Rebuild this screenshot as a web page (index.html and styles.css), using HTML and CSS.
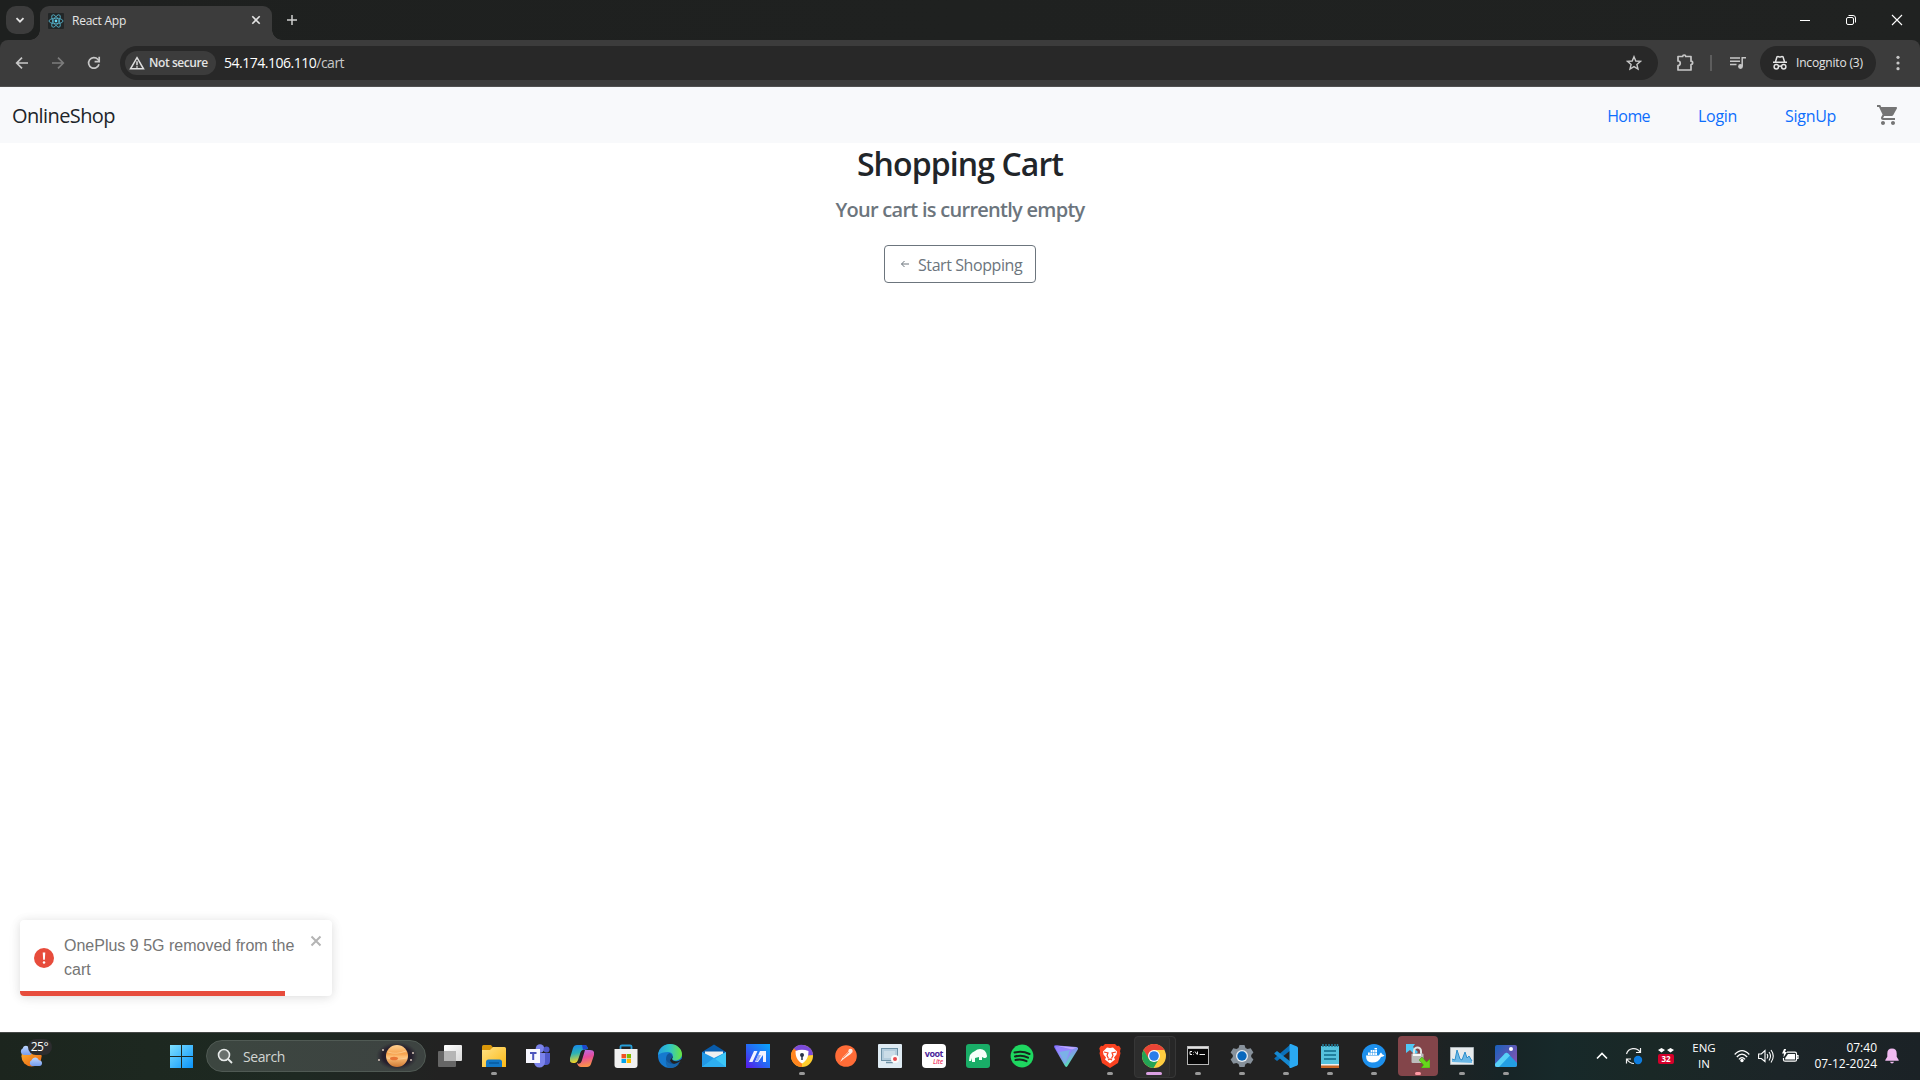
FILE: index.html
```html
<!DOCTYPE html>
<html lang="en">
<head>
<meta charset="utf-8">
<title>React App</title>
<link rel="stylesheet" href="styles.css">
</head>
<body>
<div class="screen">
  <header class="tabstrip">
    <button class="tab-search"><svg width="12" height="12" viewBox="0 0 12 12"><path d="M2.5 4.2 6 7.7l3.5-3.5" fill="none" stroke="#e3e3e3" stroke-width="1.8"/></svg></button>
    <div class="tab">
      <svg class="favicon" width="16" height="16" viewBox="0 0 16 16"><rect width="16" height="16" rx="1" fill="#222627"/><g fill="none" stroke="#58b9d3" stroke-width=".8"><ellipse cx="8" cy="8" rx="7" ry="2.8"/><ellipse cx="8" cy="8" rx="7" ry="2.8" transform="rotate(60 8 8)"/><ellipse cx="8" cy="8" rx="7" ry="2.8" transform="rotate(120 8 8)"/></g><circle cx="8" cy="8" r="1.4" fill="#61dafb"/></svg>
      <span class="tab-title">React App</span>
      <svg class="tab-close" width="10" height="10" viewBox="0 0 10 10"><path d="m1.3 1.3 7.4 7.4M8.700 1.300 1.300 8.700" stroke="#e3e3e3" stroke-width="1.6"/></svg>
    </div>
    <svg class="new-tab" width="12" height="12" viewBox="0 0 12 12"><path d="M6 1v10M1 6h10" stroke="#d0d0d0" stroke-width="1.5"/></svg>
    <div class="window-buttons">
      <svg width="12" height="12" viewBox="0 0 12 12"><path d="M1 6.500h10" stroke="#fff"/></svg>
      <svg width="12" height="12" viewBox="0 0 12 12"><g fill="none" stroke="#fff"><rect x="1.500" y="3.500" width="7" height="7" rx="1.500"/><path d="M3.500 1.500H8a2.500 2.500 0 0 1 2.500 2.500v4.500"/></g></svg>
      <svg width="12" height="12" viewBox="0 0 12 12"><path d="m1 1 10 10M11 1 1 11" stroke="#fff" stroke-width="1.100"/></svg>
    </div>
  </header>

  <div class="toolbar">
    <svg class="nav-icon" viewBox="0 0 16 16"><path d="M14 8H3M8 2.700 2.700 8 8 13.300" fill="none" stroke="#c7c7c7" stroke-width="1.700"/></svg>
    <svg class="nav-icon" viewBox="0 0 16 16"><path d="M2 8h11M8 2.700 13.300 8 8 13.300" fill="none" stroke="#7c7c7c" stroke-width="1.700"/></svg>
    <svg class="nav-icon" viewBox="0 0 16 16"><path d="M13 9.300A5.300 5.300 0 1 1 11.800 4.300L13 5.800" fill="none" stroke="#c7c7c7" stroke-width="1.700"/><path d="M13.200 1.800v4.800H8.600" fill="none" stroke="#c7c7c7" stroke-width="1.700"/></svg>
    <div class="omnibox">
      <div class="security-chip">
        <svg width="16" height="14" viewBox="0 0 16 14"><path d="M8 1.700 14.500 12.800h-13Z" fill="none" stroke="#dedede" stroke-width="1.500"/><path d="M8 5.200v4M8 10.200v1.500" stroke="#dedede" stroke-width="1.500"/></svg>
        <span>Not secure</span>
      </div>
      <span class="url">54.174.106.110<span class="url-path">/cart</span></span>
      <svg class="star" width="16" height="16" viewBox="0 0 16 16"><path d="m8 1.700 1.800 4.300 4.700.4-3.600 3.100 1.100 4.600-4-2.500-4 2.500 1.100-4.600-3.600-3.100 4.700-.4Z" fill="none" stroke="#c7c7c7" stroke-width="1.400"/></svg>
    </div>
    <svg class="extensions" width="18" height="18" viewBox="0 0 18 18"><path d="M2 2.500h4.700a1.500 1.500 0 0 1 3 0H15v4.700a1.600 1.600 0 0 1 0 3.300v5.500H2v-4.500a2.200 2.200 0 0 0 0-4.500Z" fill="none" stroke="#c7c7c7" stroke-width="1.700" stroke-linejoin="round"/></svg>
    <span class="toolbar-divider"></span>
    <svg class="media" width="16" height="14" viewBox="0 0 16 14"><path d="M0 2h10M0 5.300h10M0 8.600h6.500M12.200 10V1.700H16" fill="none" stroke="#c7c7c7" stroke-width="1.500"/><circle cx="10.500" cy="10.500" r="2.400" fill="#c7c7c7"/></svg>
    <div class="incognito">
      <svg width="16" height="16" viewBox="0 0 16 16"><path d="M1 7.200h14M3.500 6.800 5 1.800c1-.7 1.700.1 3 .1s2-.8 3-.1l1.500 5" fill="none" stroke="#e3e3e3" stroke-width="1.500"/><g fill="none" stroke="#e3e3e3" stroke-width="1.500"><circle cx="4.300" cy="11.700" r="2.200"/><circle cx="11.700" cy="11.700" r="2.200"/><path d="M6.500 11.300q1.500-.8 3 0"/></g></svg>
      <span>Incognito (3)</span>
    </div>
    <svg class="menu" width="4" height="16" viewBox="0 0 4 16"><g fill="#c7c7c7"><circle cx="2" cy="2.300" r="1.600"/><circle cx="2" cy="8" r="1.600"/><circle cx="2" cy="13.700" r="1.600"/></g></svg>
  </div>

  <nav class="navbar">
    <a class="brand">OnlineShop</a>
    <div class="nav-links">
      <a class="link-home">Home</a>
      <a class="link-login">Login</a>
      <a class="link-signup">SignUp</a>
      <svg width="24" height="24" viewBox="0 0 24 24"><path fill="#757575" d="M7 18c-1.100 0-1.990.9-1.990 2S5.900 22 7 22s2-.9 2-2-.9-2-2-2zM1 2v2h2l3.600 7.590-1.350 2.450c-.16.28-.25.610-.25.960 0 1.100.9 2 2 2h12v-2H7.420c-.14 0-.25-.11-.25-.25l.03-.12.9-1.630h7.450c.75 0 1.410-.41 1.750-1.030l3.580-6.490c.08-.14.12-.31.12-.48 0-.55-.45-1-1-1H5.210l-.94-2H1zm16 16c-1.100 0-1.990.9-1.990 2s.89 2 1.990 2 2-.9 2-2-.9-2-2-2z"/></svg>
    </div>
  </nav>

  <main class="cart">
    <h2>Shopping Cart</h2>
    <p class="empty">Your cart is currently empty</p>
    <button class="start-shopping">
      <svg width="10" height="10" viewBox="0 0 10 10"><path d="M9 5H1.500M4.500 2 1.500 5l3 3" fill="none" stroke="#6c757d"/></svg>
      <span>Start Shopping</span>
    </button>
  </main>

  <aside class="toast">
    <div class="toast-body">
      <svg width="20" height="20" viewBox="0 0 24 24"><circle cx="12" cy="12" r="12" fill="#e74c3c"/><path d="M10.500 5.500h3l-.5 8.700h-2z" fill="#fff"/><circle cx="12" cy="17.300" r="1.500" fill="#fff"/></svg>
      <p>OnePlus 9 5G removed from the cart</p>
      <svg class="toast-close" width="12" height="12" viewBox="0 0 12 12"><path d="m1.500 1.500 9 9M10.500 1.500l-9 9" stroke="#b4b4b4" stroke-width="2"/></svg>
    </div>
    <div class="toast-progress"></div>
  </aside>

  <footer class="taskbar">
    <div class="weather">
      <svg width="24" height="22" viewBox="0 0 26 24"><defs><linearGradient id="sun" x2="0.600" y2="1"><stop stop-color="#fdc03a"/><stop offset="1" stop-color="#ee6b12"/></linearGradient><linearGradient id="cloud" x2="0" y2="1"><stop stop-color="#bfd8ff"/><stop offset="1" stop-color="#759ced"/></linearGradient></defs><circle cx="12.500" cy="12.500" r="11" fill="url(#sun)"/><path d="M4 11a4 4 0 0 1-1-7.500C4 0 9 0 10 4c4 0 4 7 0 7Z" fill="url(#cloud)"/><path d="M13 23a3.500 3.500 0 0 1-.5-6.500c1.500-4 7-4 8 .2 4.500-.4 4.500 6.300.5 6.300Z" fill="url(#cloud)"/></svg>
      <span class="temperature">25°</span>
    </div>

    <div class="app"><svg viewBox="0 0 24 24"><defs><linearGradient id="win" x2="1" y2="1"><stop stop-color="#7ee0ff"/><stop offset="1" stop-color="#0a94fb"/></linearGradient></defs><path d="M1 1h11v11H1zM13 1h11v11H13zM1 13h11v11H1zM13 13h11v11H13z" fill="url(#win)"/></svg></div>

    <div class="search">
      <svg width="16" height="16" viewBox="0 0 16 16"><circle cx="7" cy="7" r="5.500" fill="#69706d" stroke="#e8ebea" stroke-width="1.600"/><path d="m11 11 4 4" stroke="#e8ebea" stroke-width="1.800"/></svg>
      <span>Search</span>
      <svg class="planet" width="42" height="28" viewBox="0 0 42 28"><defs><radialGradient id="night"><stop stop-color="#221421"/><stop offset=".7" stop-color="#241c2b" stop-opacity=".9"/><stop offset="1" stop-color="#2c2832" stop-opacity="0"/></radialGradient><linearGradient id="planet" x2="0" y2="1"><stop stop-color="#ffd191"/><stop offset=".4" stop-color="#f6a24e"/><stop offset=".55" stop-color="#ffc27a"/><stop offset="1" stop-color="#cf7934"/></linearGradient></defs><ellipse cx="21" cy="14" rx="21" ry="14" fill="url(#night)"/><circle cx="21" cy="14" r="11" fill="url(#planet)"/><path d="M12 10q8 3 18-1M11 16q9 3 20 0" fill="none" stroke="#ffe1b2" opacity=".5"/><ellipse cx="18" cy="16.500" rx="4" ry="1.800" fill="#e97636"/><g fill="#d9c6bb"><circle cx="7" cy="8" r="1"/><circle cx="3" cy="18" r="1"/><circle cx="37" cy="11" r="1"/><circle cx="35" cy="18" r="1"/></g></svg>
    </div>

    <div class="apps">
      <div class="app"><svg viewBox="0 0 24 24"><defs><linearGradient id="tv" x2="1" y2="1"><stop stop-color="#fff"/><stop offset="1" stop-color="#d8d8d8"/></linearGradient></defs><rect y="7" width="18" height="16" rx="1" fill="#666"/><rect x="6" y="1" width="18" height="16" rx="1" fill="url(#tv)"/><path d="M6 7h12v10H6z" fill="#b5b5b5"/></svg></div>
      <div class="app running"><svg viewBox="0 0 24 24"><defs><linearGradient id="folder" x2="1" y2="1"><stop stop-color="#ffe287"/><stop offset="1" stop-color="#fcb915"/></linearGradient></defs><path d="M0 2.500Q0 1 1.500 1H9l2 2.500V6H0Z" fill="#d99609"/><path d="M0 6h8l3-3h11.500Q24 3 24 4.500V23H0Z" fill="url(#folder)"/><path d="M4 23v-5q0-2.500 2.500-2.500h11Q20 15.500 20 18v5Z" fill="#1277c6"/><path d="M7 19h10" stroke="#075a9f" stroke-width="1.500"/></svg></div>
      <div class="app"><svg viewBox="0 0 24 24"><circle cx="14" cy="4.500" r="4.300" fill="#7b83eb"/><circle cx="20.500" cy="5.500" r="3" fill="#5059c9"/><path d="M16 9h8v8q0 4-4 4h-4Z" fill="#5059c9"/><path d="M9 9h10v9a5.500 5.500 0 0 1-11 0Z" fill="#7b83eb"/><rect y="5" width="14" height="14" fill="#f7f7ff"/><path d="M4 9h6.500M7.200 9v7" stroke="#4b53bc" stroke-width="2"/></svg></div>
      <div class="app"><svg viewBox="0 0 24 24"><defs><linearGradient id="cpa" x2="0.200" y2="1"><stop stop-color="#1683ef"/><stop offset=".5" stop-color="#2cb2b5"/><stop offset="1" stop-color="#f5d322"/></linearGradient><linearGradient id="cpb" x2="0.200" y2="1"><stop stop-color="#b072f3"/><stop offset=".5" stop-color="#e64c9b"/><stop offset="1" stop-color="#fb904a"/></linearGradient></defs><path d="M7 1h8q2 0 3 4l-5 1q-2 0-3 4l-2 6q-1 3-3 3H3q-4 0-3-5L3 4q1-3 4-3Z" fill="url(#cpa)"/><path d="M15 6h5q5 0 4 5l-3 9q-1 3-4 3h-6q-3 0-4-4 4 1 5-3Z" fill="url(#cpb)"/><path d="M12 1h3q2 0 3 4-4 0-5 1Z" fill="#1c47cd"/><path d="m11 8 2.500-2-3 13-2.500 1Z" fill="#242126"/></svg></div>
      <div class="app"><svg viewBox="0 0 24 24"><path d="M6.500 6V2.500Q6.500 1.500 8 1.500h8q1.500 0 1.500 1V6" fill="none" stroke="#269ed8" stroke-width="1.800"/><path d="M.5 5h23v16q0 3-3 3h-17q-3 0-3-3Z" fill="#f1f1f1"/><path d="M7.500 10H12v4.300H7.500z" fill="#f25022"/><path d="M12.700 10H17v4.300h-4.300z" fill="#7fba00"/><path d="M7.500 15H12v4H7.500z" fill="#00a4ef"/><path d="M12.700 15H17v4h-4.300z" fill="#ffb900"/></svg></div>
      <div class="app"><svg viewBox="0 0 24 24"><defs><linearGradient id="eda"><stop stop-color="#239fe3"/><stop offset=".5" stop-color="#32c6c4"/><stop offset="1" stop-color="#6be63d"/></linearGradient></defs><circle cx="12" cy="12" r="12" fill="#1579cf"/><path d="M0 11C1 3.500 6.500 0 12 0c7 0 12 5 12 10 0 4-3 6.500-7 6.500-2 0-3.500-1-2.500-2.500 1-2 .5-6-4.500-6-4 0-8 1-10 3Z" fill="url(#eda)"/><path d="M8 15q0-4.500 3.500-6 3 1 3 4c0 1-2 2 0 4 2 1.500 5 1 8-.5C18 24 8 24 8 15Z" fill="#115499"/><path d="M15 12c0 2-2 2.500 0 4.500 1.500 1 4 1 6 .2l3-2V19l-3 1.500q-7 .5-9-4Z" fill="#222"/><path d="M22.500 17C20 21.500 16 24 12 24c-2 0-5-3-4-8 2 4 8 6 14.500 1Z" fill="#1766ad"/></svg></div>
      <div class="app"><svg viewBox="0 0 24 24"><path d="M0 8 12 .5 24 8v6H0Z" fill="#085baa"/><path d="M3 7.500h18v8H3Z" fill="#f0f0f0"/><path d="m0 8 12 6 12-6v15H0Z" fill="#2298e6"/><path d="M24 8v15H0Z" fill="#3cc6f7"/><path d="m12 14 12 9H0l12-9" fill="#2eaef0"/></svg></div>
      <div class="app"><svg viewBox="0 0 24 24"><defs><linearGradient id="ma" y1="1" x2="1" y2="0"><stop stop-color="#5a16e8"/><stop offset=".5" stop-color="#256af5"/><stop offset="1" stop-color="#08a6fc"/></linearGradient></defs><path d="M0 0h24v24H0z" fill="url(#ma)"/><path d="m3 18 5-11h3.500l-5 11ZM9 18l5-11h6v11h-3v-7l-5 7Z" fill="#f1f3ff"/><path d="m12 11-3 7 3-1 3-6" fill="#9db0f5"/></svg></div>
      <div class="app running"><svg viewBox="0 0 24 24"><circle cx="12" cy="12" r="11" fill="#ffce2e"/><path d="M12 12 3 5.500A11 11 0 0 1 23 11Z" fill="#7b4bd9"/><path d="M12 12v11A11 11 0 0 1 4 4.500Z" fill="#ff851f"/><path d="M5.500 7q6.500-2.500 13 0c0 6-2 10-6.500 12.500C7.500 17 5.500 13 5.500 7Z" fill="#fff"/><circle cx="12" cy="11" r="2" fill="#283348"/><path d="M12 11v5" stroke="#283348" stroke-width="1.500"/></svg></div>
      <div class="app"><svg viewBox="0 0 24 24"><circle cx="12" cy="12" r="10.800" fill="#ff6c37"/><path d="m6 18 3-5 6-6 2.500 2.500L11 14Z" fill="#fbeae2"/><circle cx="16.500" cy="7" r="2.200" fill="#fbeae2"/><path d="m9 14 6-6" stroke="#ff6c37" stroke-width=".7"/></svg></div>
      <div class="app"><svg viewBox="0 0 24 24"><rect width="24" height="24" rx="1" fill="#dfebf3"/><rect x="3.500" y="4.500" width="16" height="12" fill="#b4cddd" stroke="#6d91a6"/><path d="M6 7h11v7H6z" fill="#cbdde8"/><path d="M8 18.500h7" stroke="#6d91a6" stroke-width="1.500"/><circle cx="17" cy="15" r="4" fill="#fafafa"/><circle cx="17" cy="15" r="2" fill="#e8484c"/></svg></div>
      <div class="app"><div class="voot"><b>voot</b><i>Lite</i></div></div>
      <div class="app"><svg viewBox="0 0 24 24"><rect width="24" height="24" rx="3" fill="#19ad67"/><path d="M3 17q0-8 6-10 2-2 5-2 6 0 7 7 0 2-3 2l-2-1v3h-3v-3l-4 1v4H6v-4l-1 3Z" fill="#f5fff9"/></svg></div>
      <div class="app"><svg viewBox="0 0 24 24"><circle cx="12" cy="12" r="11.400" fill="#1ed760"/><path d="M4.500 8.500q8-2 15 1.500M5 12.500q7-2 13 1.200M5.500 16q6-1.500 11 1.200" fill="none" stroke="#18251d" stroke-width="2" stroke-linecap="round"/></svg></div>
      <div class="app"><svg viewBox="0 0 24 24"><defs><linearGradient id="vpn" x2=".5" y2="1"><stop stop-color="#6855f5"/><stop offset=".5" stop-color="#8694ef"/><stop offset="1" stop-color="#55e0b4"/></linearGradient></defs><path d="M1 1.200 22.500 3Q25 3.500 23.500 6L13.500 22Q12 24 10.700 21.500L.3 3.500Q-.5 1.500 1 1.200Z" fill="url(#vpn)"/><path d="m1 2 15 3q2 .5 1 2.500L11 20 2 5Z" fill="#9785ff"/><path d="m5 8 11-2-5 14Z" fill="#6bc9da" opacity=".65"/><path d="m1 1.500 22 2-5 2Z" fill="#c0a8ff"/></svg></div>
      <div class="app running"><svg viewBox="0 0 24 24"><path d="M7 0h10l2 2 2-.3 1.700 2.500-.7 3 .5 2L20 19l-8 5-8-5L1.500 9.200l.5-2-.7-3L3 1.700 5 2Z" fill="#fb4220"/><path d="m12 4 3-.5 4 4-.5 3-2.500 3 1 2-5 4-5-4 1-2-2.500-3L5 7.500l4-4Z" fill="#fff"/><path d="m6 8 4 1-1 2.500 1.500 3M18 8l-4 1 1 2.500-1.500 3M10 16l2-1 2 1" fill="none" stroke="#fb4220" stroke-width="1.200"/></svg></div>
      <div class="app active"><svg viewBox="0 0 24 24"><circle cx="12" cy="12" r="12" fill="#ffcd40"/><path d="M1.600 6A12 12 0 0 1 22.400 6H12L6.500 15Z" fill="#e94436"/><path d="M1.600 6A12 12 0 0 0 11.500 24L17 15H7Z" fill="#23a455"/><circle cx="12" cy="12" r="6" fill="#fff"/><circle cx="12" cy="12" r="4.800" fill="#287de9"/></svg></div>
      <div class="app running"><svg viewBox="0 0 24 24"><path d="M1 2h22v19H1Z" fill="#b7b7b7"/><path d="M2 5h20v15H2Z" fill="#070707"/><path d="M2 3.500h20" stroke="#e2e2e2" stroke-width="1.500"/><path d="M6 7.500H4v3h2m1.500-2v.5m0 1v.5m1.500-3 2 3m.5-3v3M13.500 10.500H19" fill="none" stroke="#eee"/></svg></div>
      <div class="app running"><svg viewBox="0 0 24 24"><path d="m9.500 1 5-.1 1 3.100 2 1 3.200-.7 2.700 4.200-2.200 2.500v2l2.200 2.500-2.700 4.200-3.200-.7-2 1-1 3h-5l-1-3-2-1-3.200.7-2.700-4.200L2.800 13v-2L.6 8.500l2.700-4.200 3.200.7 2-1Z" fill="#87919b"/><circle cx="12" cy="12" r="6" fill="#e8edf2"/><circle cx="12" cy="12" r="4.700" fill="#0968bd"/></svg></div>
      <div class="app running"><svg viewBox="0 0 24 24"><path d="m17 6-14 11-2.500-2Q0 14.500.7 14L17 0Z" fill="#0b70b8"/><path d="M17 24 .7 10Q0 9.500.5 9L3 7l14 11Z" fill="#1689d1"/><path d="m17 0 6 2.500q1 .5 1 1.500v16q0 1-1 1.500L17 24q-1.500.5-1.500-1V1Q15.500-.5 17 0Z" fill="#2aa9f2"/></svg></div>
      <div class="app running"><svg viewBox="0 0 24 24"><path d="M3 20h18v4H3Z" fill="#c86725"/><path d="M3 2h18v18H3Z" fill="#56c2dd"/><path d="M3 20h18v1.500H3Z" fill="#eee"/><path d="M5 0v3m3-3v3m3-3v3m3-3v3m3-3v3m2.500-3v3" stroke="#247e9a" stroke-width="1.500"/><path d="M6 7h12M6 11h12M6 15h12" stroke="#116b89" stroke-width="1.600"/></svg></div>
      <div class="app running"><svg viewBox="0 0 24 24"><circle cx="12" cy="12" r="12" fill="#1d90ed"/><path d="M4 11.500h13q1-2.500 2-3l1.500 2 2 .8q-1 1.700-3.500 1.700Q17 18.500 10 18.500q-6 0-6-7Z" fill="#fff"/><path d="M6 8.500h9v2.500H6ZM8.500 6H15v2H8.500ZM12.500 4H15v1.500h-2.500Z" fill="#fff"/><path d="M8.200 6v5m2.300-5v5m2.300-6v6" stroke="#1d90ed" stroke-width=".5"/></svg></div>
      <div class="app running alert"><svg viewBox="0 0 24 24"><path d="M0 0h9L7 3l5 5-3 3-5-5-4 3Z" fill="#50c8f5"/><path d="M8 11V7a3.500 3.500 0 0 1 7 0v4" fill="none" stroke="#e2e2e2" stroke-width="2"/><rect x="5.500" y="9.500" width="12" height="9.500" rx="1" fill="#bcbcbc"/><path d="M7 11h8" stroke="#f8f8f8" stroke-width="2"/><path d="m13 16 3-3 4.500 5L24 15v9h-9l2.500-3Z" fill="#67d71c" stroke="#399511" stroke-width=".5"/></svg></div>
      <div class="app running"><svg viewBox="0 0 24 24"><path d="M.5 3.500h23v17H.5Z" fill="#e7ebed" stroke="#abb3b8"/><path d="M2 18v-3l3 1 2-10 3 9 2 1 3-8 2 6 2-2 3 5v2Z" fill="#6bb8e7"/><path d="m2 15 3 1 2-10 3 9 2 1 3-8 2 6 2-2 3 5" fill="none" stroke="#2d8ecb"/></svg></div>
      <div class="app running"><svg viewBox="0 0 24 24"><defs><linearGradient id="photo" x2="1" y2=".7"><stop stop-color="#1761bc"/><stop offset="1" stop-color="#8154b3"/></linearGradient></defs><rect x="1" y="1" width="22" height="22" rx="2" fill="url(#photo)"/><path d="M1 20 11 9.500q1.500-1.500 3 0L23 19v2q0 2-2 2H3q-2 0-2-2Z" fill="#239ee2"/><path d="M1 20 11 9.500q1.500-1.500 3 0l2 2L5 23H3q-2 0-2-2Z" fill="#59d0f6"/><circle cx="17" cy="5" r="2" fill="#fff"/></svg></div>
    </div>

    <div class="tray">
      <div class="tray-item"><svg width="12" height="8" viewBox="0 0 12 8"><path d="m1 6.500 5-5 5 5" fill="none" stroke="#fff" stroke-width="1.600"/></svg></div>
      <div class="tray-item"><svg width="18" height="18" viewBox="0 0 18 18"><path d="M1.500 7A7.500 7.500 0 0 1 15 5M15.500 1v4.500H11M1.500 16.500V12H6M2 12.300Q4.500 16.500 9 16.500" fill="none" stroke="#f2f2f2" stroke-width="1.200"/><circle cx="13" cy="13" r="4.200" fill="#0e7ddf"/></svg></div>
      <div class="tray-item mail-count"><svg width="16" height="5" viewBox="0 0 16 5"><path d="m0 2 3.500-2 3.500 2-3.500 2.500ZM9 2l3.500-2L16 2l-3.500 2.500Z" fill="#fff"/></svg><b>32</b></div>
      <div class="language"><span>ENG</span><span>IN</span></div>
      <div class="status">
        <svg width="16" height="14" viewBox="0 0 16 14"><g fill="none" stroke="#fff" stroke-width="1.200"><path d="M.7 5.500q7.300-7.800 14.600 0M2.800 8q5.200-5.600 10.400 0M4.900 10.300q3.100-3.400 6.200 0"/></g><circle cx="8" cy="11.500" r="1.700" fill="#fff"/></svg>
        <svg width="16" height="14" viewBox="0 0 16 14"><g fill="none" stroke="#fff" stroke-width="1.100"><path d="M.6 5v4.500h2.700l3.700 3V1.500L3.300 5ZM9 5q1.500 2 0 4.500M11 3q3 4 0 8.500M13 1q4.500 6 0 12.500"/></g></svg>
        <svg width="17" height="14" viewBox="0 0 17 14"><path d="M5 3.200h8q1.500 0 1.500 1.500v6q0 1.500-1.500 1.500H3q-1.500 0-1.500-1.500V9M14.500 6.500H16v3h-1.500" fill="none" stroke="#fff" stroke-width="1.200"/><path d="M6 5h7v5.500H3.200V9Z" fill="#fff"/><path d="M2.500-1 0 4.500h2L1.500 8.500 5 3H3L4.500-1Z" fill="#fff"/></svg>
      </div>
      <div class="clock"><span class="time">07:40</span><span class="date">07-12-2024</span></div>
      <svg class="bell" width="14" height="16" viewBox="0 0 14 16"><path d="M7 .5q4.700 0 4.700 5v3.200l2 3.300v.8H.3V12l2-3.300V5.500q0-5 4.700-5ZM5 13.700h4Q8.500 15.500 7 15.500t-2-1.800Z" fill="#f0baf0"/></svg>
    </div>
  </footer>
</div>
</body>
</html>
```
FILE: styles.css
```css
* { box-sizing: border-box; }
body { margin: 0; font-family: "Open Sans", "Noto Sans", sans-serif; background: #fff; }
svg { display: block; flex: none; }
h2, p { margin: 0; }
button { padding: 0; font: inherit; }
span, b, i, a { white-space: nowrap; }

.screen { position: relative; display: flex; flex-direction: column; width: 1920px; height: 1080px; overflow: hidden; background: #202221; }

/* Browser window */
.tabstrip { display: flex; align-items: center; height: 40px; padding-left: 6px; background: linear-gradient(90deg, #1e201f, #202221); }
.tab-search { display: flex; align-items: center; justify-content: center; width: 28px; height: 28px; border: 0; border-radius: 10px; background: #3c3c3c; }
.tab { position: relative; display: flex; align-items: center; align-self: flex-end; width: 232px; height: 34px; margin-left: 6px; padding: 0 11px 5px 8px; border-radius: 9px 9px 0 0; background: #3c3c3c; }
.tab::before, .tab::after { content: ""; position: absolute; bottom: 0; width: 10px; height: 10px; }
.tab::before { left: -10px; background: radial-gradient(circle at 0 0, transparent 9.500px, #3c3c3c 10px); }
.tab::after { right: -10px; background: radial-gradient(circle at 100% 0, transparent 9.500px, #3c3c3c 10px); }
.tab-title { margin-left: 8px; font-size: 12px; letter-spacing: -.25px; line-height: 18px; color: #e6e6e6; }
.tab-close { margin-left: auto; margin-bottom: 1px; }
.new-tab { margin-left: 14px; }
.window-buttons { display: flex; gap: 34px; margin-left: auto; padding-right: 17px; }

.toolbar { display: flex; align-items: center; height: 47px; padding-left: 14px; border-bottom: 1px solid #505050; border-radius: 8px 8px 0 0; background: #3c3c3c; }
.nav-icon { width: 16px; height: 16px; margin-right: 20px; }
.omnibox { display: flex; align-items: center; width: 1538px; height: 34px; margin-left: -2px; padding: 0 16px 0 5px; border-radius: 17px; background: #282828; }
.security-chip { display: flex; align-items: center; gap: 4px; width: 91px; height: 24px; padding-left: 4px; border-radius: 12px; background: #3c3c3c; color: #e3e3e3; font-size: 12px; font-weight: 600; letter-spacing: -.42px; }
.security-chip span, .url, .incognito span { padding-bottom: 1px; }
.url { margin-left: 8px; color: #fff; font-size: 14px; letter-spacing: -.49px; }
.url-path { color: #c7c7c7; }
.star { margin-left: auto; }
.extensions { margin-left: 18px; }
.toolbar-divider { width: 2px; height: 16px; margin-left: 16px; background: #5d5d5d; }
.media { margin-left: 18px; }
.incognito { display: flex; align-items: center; gap: 8px; width: 116px; height: 34px; margin-left: 14px; padding-left: 12px; border-radius: 17px; background: #282828; color: #e3e3e3; font-size: 12px; letter-spacing: -.18px; }
.menu { margin-left: 20px; }

/* Page */
.navbar { display: flex; align-items: center; justify-content: space-between; height: 56px; padding: 0 20px 0 12px; background: #f8f9fb; }
.brand { padding-top: 1px; color: #212529; font-size: 20px; letter-spacing: -.6px; }
.nav-links { display: flex; align-items: center; color: #0d6efd; font-size: 16px; letter-spacing: -.3px; }
.nav-links a { padding-top: 1px; }
.link-home { margin-right: 48px; letter-spacing: -.6px; }
.link-login { margin-right: 48px; }
.link-signup { margin-right: 40px; }

.cart { display: flex; flex: 1; flex-direction: column; align-items: center; background: #fff; color: #212529; }
.cart h2 { padding-top: 1px; font-size: 32px; font-weight: 600; line-height: 40px; letter-spacing: -.9px; }
.empty { margin-top: 14px; color: #6c757d; font-size: 20px; font-weight: 600; line-height: 24px; letter-spacing: -.73px; }
.start-shopping { display: flex; align-items: center; width: 152px; height: 38px; margin-top: 23px; padding-left: 15px; border: 1px solid #6c757d; border-radius: 4px; background: #fff; color: #6c757d; font-size: 16px; letter-spacing: -.42px; }
.start-shopping span { margin-left: 8px; padding-top: 1px; }

.toast { position: absolute; left: 20px; top: 920px; display: flex; flex-direction: column; width: 312px; height: 76px; border-radius: 4px; background: #fff; box-shadow: 0 1px 10px rgba(0, 0, 0, .1), 0 2px 15px rgba(0, 0, 0, .05); }
.toast-body { display: flex; flex: 1; align-items: center; padding: 5px 10px 0 14px; }
.toast-body p { width: 240px; margin-left: 10px; color: #757575; font: 16px/24px "Liberation Sans", Arial, sans-serif; }
.toast-close { align-self: flex-start; margin: 10px 0 0 auto; }
.toast-progress { width: 265px; height: 5px; border-radius: 0 0 0 4px; background: #e74c3c; }

/* Taskbar */
.taskbar { display: flex; align-items: center; height: 48px; padding-bottom: 1px; border-top: 1px solid #454846; background: linear-gradient(90deg, #1c251e 0, #1d2820 150px, #1e2922 300px, #222 440px, #222 1400px, #172426 1500px, #17292a 1560px, #1a2826 1650px, #1c2528 1780px, #1b2226 1920px); color: #fff; }
.weather { position: relative; width: 159px; padding-left: 20px; }
.temperature { position: absolute; left: 28px; top: -6px; width: 24px; height: 16px; padding-right: 1px; border-radius: 8px; background: #2d2d2f; font-size: 12px; line-height: 16px; text-align: center; letter-spacing: -.4px; }
.app { position: relative; display: flex; align-items: center; justify-content: center; width: 44px; height: 40px; }
.app svg { width: 24px; height: 24px; }
.search { display: flex; align-items: center; width: 220px; height: 32px; margin: 0 2px 0 3px; padding: 0 7px 0 10px; border: 1px solid #505a54; border-radius: 16px; background: linear-gradient(90deg, #3c4640, #3d4341); color: #d2d5d3; font-size: 14px; letter-spacing: -.4px; }
.search span { margin-left: 10px; }
.planet { margin-left: auto; }
.apps { display: flex; width: 1158px; }
.running::after, .active::after { content: ""; position: absolute; bottom: 1px; left: 19px; width: 6px; height: 3px; border-radius: 2px; background: #999; }
.active::before { content: ""; position: absolute; left: 2px; top: 0; width: 40px; height: 40px; border: 1px solid #373737; border-radius: 4px; background: #2d2d2d; box-shadow: inset -5px 0 0 #272727, inset -6px 0 0 #353535; }
.active svg { position: relative; }
.active::after { left: 14px; width: 16px; background: #dba0e3; }
.alert { width: 40px; margin: 0 2px; border-radius: 4px; background: #83454a; }
.alert::after { left: 17px; background: #ff99a4; }
.voot { display: flex; flex-direction: column; align-items: flex-end; width: 24px; height: 24px; padding: 5px 3px 0; border-radius: 4px; background: #fff; letter-spacing: -.5px; }
.voot b { color: #4b1e99; font-size: 9px; line-height: 9px; }
.voot i { color: #ed4269; font-size: 6.500px; font-weight: 600; line-height: 7px; letter-spacing: -.2px; }

.tray { display: flex; align-items: center; }
.tray-item { display: flex; align-items: center; justify-content: center; width: 32px; }
.mail-count { flex-direction: column; gap: 1px; }
.mail-count b { width: 16px; height: 10px; border-radius: 2px; background: #d5002b; font-size: 8px; line-height: 10px; text-align: center; }
.language { display: flex; flex-direction: column; align-items: center; width: 44px; font-size: 11.500px; line-height: 16px; }
.status { display: flex; gap: 8px; width: 72px; margin-left: 8px; }
.clock { display: flex; flex-direction: column; align-items: flex-end; width: 71px; font-size: 12px; line-height: 16px; }
.bell { margin-left: 8px; }
```
